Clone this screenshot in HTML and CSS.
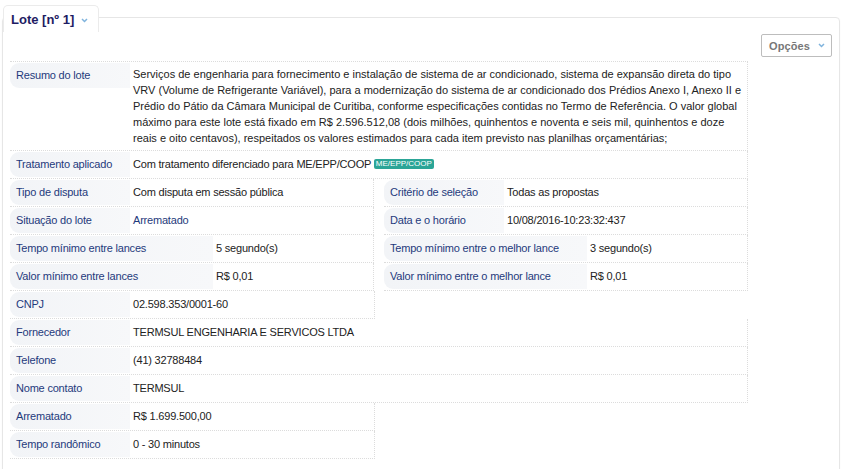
FILE: index.html
```html
<!DOCTYPE html>
<html lang="pt-BR">
<head>
  <meta charset="UTF-8">
  <title>Lote [nº 1]</title>
  <link rel="stylesheet" href="styles.css">
</head>
<body>

<div class="tab">
  <span class="tab-title">Lote [nº 1]</span>
  <svg class="chev" width="7" height="5" viewBox="0 0 7 5"><polyline points="1,1 3.5,3.5 6,1" fill="none" stroke="#7fb3dd" stroke-width="1.5"/></svg>
</div>

<div class="panel">
  <div class="toolbar">
    <button class="btn-opcoes">Opções
      <svg class="chev" width="7" height="5" viewBox="0 0 7 5"><polyline points="1,1 3.5,3.5 6,1" fill="none" stroke="#7fb3dd" stroke-width="1.5"/></svg>
    </button>
  </div>

  <div class="row">
    <div class="field full first">
      <span class="lbl">Resumo do lote</span>
      <span class="val multi">Serviços de engenharia para fornecimento e instalação de sistema de ar condicionado, sistema de expansão direta do tipo VRV (Volume de Refrigerante Variável), para a modernização do sistema de ar condicionado dos Prédios Anexo I, Anexo II e Prédio do Pátio da Câmara Municipal de Curitiba, conforme especificações contidas no Termo de Referência. O valor global máximo para este lote está fixado em R$ 2.596.512,08 (dois milhões, quinhentos e noventa e seis mil, quinhentos e doze reais e oito centavos), respeitados os valores estimados para cada item previsto nas planilhas orçamentárias;</span>
    </div>
  </div>

  <div class="row">
    <div class="field full">
      <span class="lbl">Tratamento aplicado</span>
      <span class="val">Com tratamento diferenciado para ME/EPP/COOP <span class="badge">ME/EPP/COOP</span></span>
    </div>
  </div>

  <div class="row">
    <div class="field half">
      <span class="lbl">Tipo de disputa</span>
      <span class="val">Com disputa em sessão pública</span>
    </div>
    <div class="field half">
      <span class="lbl">Critério de seleção</span>
      <span class="val">Todas as propostas</span>
    </div>
  </div>

  <div class="row">
    <div class="field half">
      <span class="lbl">Situação do lote</span>
      <span class="val blue">Arrematado</span>
    </div>
    <div class="field half">
      <span class="lbl">Data e o horário</span>
      <span class="val">10/08/2016-10:23:32:437</span>
    </div>
  </div>

  <div class="row">
    <div class="field half">
      <span class="lbl wide">Tempo mínimo entre lances</span>
      <span class="val">5 segundo(s)</span>
    </div>
    <div class="field half">
      <span class="lbl wide">Tempo mínimo entre o melhor lance</span>
      <span class="val">3 segundo(s)</span>
    </div>
  </div>

  <div class="row">
    <div class="field half">
      <span class="lbl wide">Valor mínimo entre lances</span>
      <span class="val">R$ 0,01</span>
    </div>
    <div class="field half">
      <span class="lbl wide">Valor mínimo entre o melhor lance</span>
      <span class="val">R$ 0,01</span>
    </div>
  </div>

  <div class="row">
    <div class="field half">
      <span class="lbl">CNPJ</span>
      <span class="val">02.598.353/0001-60</span>
    </div>
  </div>

  <div class="row">
    <div class="field full">
      <span class="lbl">Fornecedor</span>
      <span class="val">TERMSUL ENGENHARIA E SERVICOS LTDA</span>
    </div>
  </div>

  <div class="row">
    <div class="field full">
      <span class="lbl">Telefone</span>
      <span class="val">(41) 32788484</span>
    </div>
  </div>

  <div class="row">
    <div class="field full">
      <span class="lbl">Nome contato</span>
      <span class="val">TERMSUL</span>
    </div>
  </div>

  <div class="row">
    <div class="field half">
      <span class="lbl">Arrematado</span>
      <span class="val">R$ 1.699.500,00</span>
    </div>
  </div>

  <div class="row">
    <div class="field half">
      <span class="lbl">Tempo randômico</span>
      <span class="val">0 - 30 minutos</span>
    </div>
  </div>
</div>

</body>
</html>
```

FILE: styles.css
```css
body {
  font-family: "Liberation Sans", Arial, sans-serif;
  font-size: 11px;
  letter-spacing: -0.2px;
  color: #222;
  background-color: #fff;
  margin: 0;
  padding: 5px 0 0 2px;
}
.tab {
  position: relative;
  z-index: 1;
  display: flex;
  align-items: center;
  gap: 7px;
  width: fit-content;
  height: 26px;
  margin-left: 1px;
  padding: 0 10px 0 7px;
  background-color: #fff;
  border: 1px solid #ebebeb;
  border-bottom: none;
  border-radius: 5px 5px 0 0;
}
.tab-title {
  font-size: 13px;
  font-weight: bold;
  letter-spacing: 0;
  color: #1e1c63;
}
.chev {
  display: block;
}
.tab .chev {
  margin-top: 3px;
}
.panel {
  width: 822px;
  margin-top: -15px;
  padding: 16px 7px 20px 7px;
  border: 1px solid #e6e6e6;
  border-radius: 4px;
  box-shadow: 0 1px 2px rgba(0, 0, 0, 0.04);
}
.toolbar {
  display: flex;
  justify-content: flex-end;
  height: 23px;
  margin-bottom: 4px;
}
.btn-opcoes {
  display: flex;
  align-items: center;
  gap: 8px;
  height: 23px;
  padding: 0 6px 0 7px;
  font-family: "Liberation Sans", Arial, sans-serif;
  font-size: 11px;
  font-weight: bold;
  letter-spacing: 0.1px;
  color: #777;
  background-color: #fff;
  border: 1px solid #bdbdbd;
  border-radius: 2px;
}
.row {
  display: flex;
  gap: 10px;
  width: 738px;
}
.field {
  display: flex;
  align-items: flex-start;
  border-bottom: 1px dotted #dcdcdc;
  border-right: 1px dotted #dcdcdc;
}
.field.first {
  border-top: 1px dotted #dcdcdc;
}
.field.full {
  width: 737px;
}
.field.half {
  width: 364px;
}
.lbl {
  flex: none;
  width: 114px;
  margin: 1px 0;
  padding-left: 6px;
  line-height: 25px;
  color: #1f3a7c;
  background: linear-gradient(to right, #f2f4f7, #f7f8fa);
  border-radius: 9px 0 0 9px;
}
.lbl.wide {
  width: 197px;
}
.val {
  padding-left: 3px;
  line-height: 27px;
}
.val.multi {
  padding: 4px 5px 4px 3px;
  letter-spacing: 0;
  line-height: 16px;
}
.val.blue {
  color: #1f3a7c;
}
.badge {
  display: inline-block;
  vertical-align: 2px;
  padding: 0 2px;
  font-size: 8px;
  letter-spacing: 0;
  line-height: 10px;
  color: #fff;
  background-color: #2ba597;
  border-radius: 2px;
}
```
